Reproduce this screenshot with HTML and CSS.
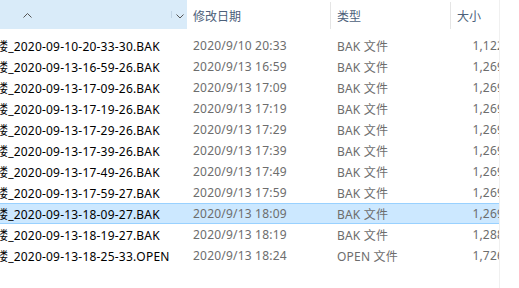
FILE: index.html
```html
<!DOCTYPE html>
<html lang="zh">
<head>
<meta charset="utf-8">
<link rel="stylesheet" href="styles.css">
</head>
<body>
<div class="view">
  <div class="header">
    <div class="hcol hname">
      <div class="hname-main">
        <svg class="sort" width="9" height="5" viewBox="0 0 9 5"><path d="M0.5 4.5 L4.5 0.5 L8.5 4.5" fill="none" stroke="#555" stroke-width="1"/></svg>
      </div>
      <div class="hname-drop">
        <svg width="8" height="5" viewBox="0 0 8 5"><path d="M0.5 0.5 L4 4 L7.5 0.5" fill="none" stroke="#555" stroke-width="1"/></svg>
      </div>
    </div>
    <div class="hcol hdate">修改日期</div>
    <div class="hcol htype">类型</div>
    <div class="hcol hsize">大小</div>
  </div>
  <div class="rows">
    <div class="row"><div class="c name"><span>楼_2020-09-10-20-33-30.BAK</span></div><div class="c date">2020/9/10 20:33</div><div class="c type">BAK 文件</div><div class="c size">1,122 KB</div></div>
    <div class="row"><div class="c name"><span>楼_2020-09-13-16-59-26.BAK</span></div><div class="c date">2020/9/13 16:59</div><div class="c type">BAK 文件</div><div class="c size">1,269 KB</div></div>
    <div class="row"><div class="c name"><span>楼_2020-09-13-17-09-26.BAK</span></div><div class="c date">2020/9/13 17:09</div><div class="c type">BAK 文件</div><div class="c size">1,269 KB</div></div>
    <div class="row"><div class="c name"><span>楼_2020-09-13-17-19-26.BAK</span></div><div class="c date">2020/9/13 17:19</div><div class="c type">BAK 文件</div><div class="c size">1,269 KB</div></div>
    <div class="row"><div class="c name"><span>楼_2020-09-13-17-29-26.BAK</span></div><div class="c date">2020/9/13 17:29</div><div class="c type">BAK 文件</div><div class="c size">1,269 KB</div></div>
    <div class="row"><div class="c name"><span>楼_2020-09-13-17-39-26.BAK</span></div><div class="c date">2020/9/13 17:39</div><div class="c type">BAK 文件</div><div class="c size">1,269 KB</div></div>
    <div class="row"><div class="c name"><span>楼_2020-09-13-17-49-26.BAK</span></div><div class="c date">2020/9/13 17:49</div><div class="c type">BAK 文件</div><div class="c size">1,269 KB</div></div>
    <div class="row"><div class="c name"><span>楼_2020-09-13-17-59-27.BAK</span></div><div class="c date">2020/9/13 17:59</div><div class="c type">BAK 文件</div><div class="c size">1,269 KB</div></div>
    <div class="row selected"><div class="c name"><span>楼_2020-09-13-18-09-27.BAK</span></div><div class="c date">2020/9/13 18:09</div><div class="c type">BAK 文件</div><div class="c size">1,269 KB</div></div>
    <div class="row"><div class="c name"><span>楼_2020-09-13-18-19-27.BAK</span></div><div class="c date">2020/9/13 18:19</div><div class="c type">BAK 文件</div><div class="c size">1,288 KB</div></div>
    <div class="row"><div class="c name"><span>楼_2020-09-13-18-25-33.OPEN</span></div><div class="c date">2020/9/13 18:24</div><div class="c type">OPEN 文件</div><div class="c size">1,726 KB</div></div>
  </div>
</div>
</body>
</html>
```
FILE: styles.css
```css
html, body {
  margin: 0;
  padding: 0;
  background: #ffffff;
}
body {
  font-family: "Noto Sans", "Noto Sans CJK SC", sans-serif;
  font-size: 12px;
  width: 519px;
  height: 288px;
  overflow: hidden;
}
.view {
  width: 499px;
  height: 288px;
  overflow: hidden;
  border-right: 1px solid #f0f0f0;
}
.header {
  display: grid;
  grid-template-columns: 187px 144px 120px 78px;
  height: 29px;
}
.hcol {
  color: #4c607a;
  display: flex;
  align-items: center;
  padding-left: 6px;
  border-right: 1px solid #e5e5e5;
  margin: 2px 0 0;
  box-sizing: border-box;
  font-family: "Noto Sans CJK SC", sans-serif;
}
.hname {
  padding: 0;
  margin: 0;
  border-right: none;
  background: #d9ebf9;
  display: grid;
  grid-template-columns: 172px 15px;
}
.hname-main {
  border-right: 1px solid #c0d4e6;
  display: flex;
  justify-content: center;
  align-items: flex-start;
  padding-top: 2px;
}
.sort {
  margin-left: -116px;
}
.hname-drop {
  display: flex;
  align-items: center;
  justify-content: center;
  padding-top: 3px;
}
.hsize { border-right: none; }
.rows {
  margin-top: 6px;
}
.row {
  display: grid;
  grid-template-columns: 187px 144px 120px 78px;
  height: 21px;
  align-items: center;
  box-sizing: border-box;
  border: 1px solid transparent;
  border-left: none;
  border-right: none;
  color: #6d6d6d;
  letter-spacing: 0.2px;
}
.row.selected {
  background: #cce8ff;
  border-color: #99d1ff;
}
.c {
  white-space: nowrap;
  overflow: hidden;
}
.name {
  color: #000000;
}
.name span {
  display: inline-block;
  margin-left: -4px;
}
.date { padding-left: 6px; }
.type { padding-left: 6px; }
.size {
  text-align: right;
  padding-right: 6px;
}
```
